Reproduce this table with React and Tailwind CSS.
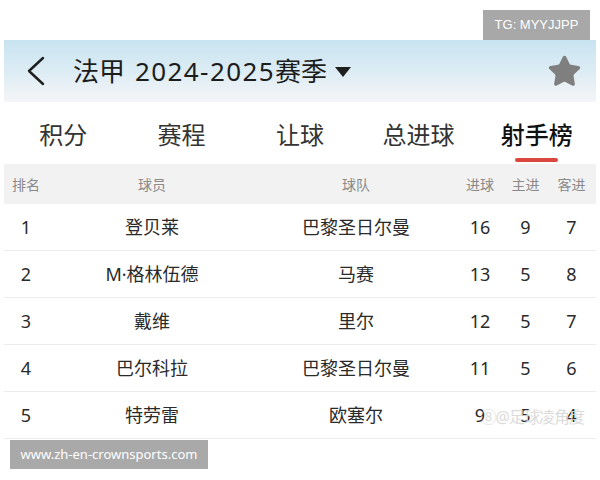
import { Star } from 'lucide-react';

const FONT = { fontFamily: '"Noto Sans", "Noto Sans CJK SC", sans-serif' };

const tabs = ['积分', '赛程', '让球', '总进球', '射手榜'];

const rows = [
  { rank: 1, player: '登贝莱', team: '巴黎圣日尔曼', goals: 16, home: 9, away: 7 },
  { rank: 2, player: 'M·格林伍德', team: '马赛', goals: 13, home: 5, away: 8 },
  { rank: 3, player: '戴维', team: '里尔', goals: 12, home: 5, away: 7 },
  { rank: 4, player: '巴尔科拉', team: '巴黎圣日尔曼', goals: 11, home: 5, away: 6 },
  { rank: 5, player: '特劳雷', team: '欧塞尔', goals: 9, home: 5, away: 4 },
];

function Cols({ cells, className }) {
  const widths = ['w-[44px]', 'w-[208px]', 'w-[200px]', 'w-[48px]', 'w-[43px]', 'w-[49px]'];
  return (
    <div className={`flex items-center ${className}`}>
      {cells.map((c, i) => (
        <div key={i} className={`${widths[i]} shrink-0 text-center whitespace-nowrap`}>
          {c}
        </div>
      ))}
    </div>
  );
}

export default function App() {
  return (
    <div className="relative w-[600px] h-[480px] bg-white overflow-hidden" style={FONT}>
      {/* top badge */}
      <div className="h-[40px] flex justify-end items-start pt-[10px] pr-[10px]">
        <div className="w-[107px] h-[30px] bg-[#a8a8a8] text-white text-[13px] flex items-center justify-center" style={{ fontFamily: '"Liberation Sans", sans-serif' }}>
          TG: MYYJJPP
        </div>
      </div>

      {/* header */}
      <div className="mx-[4px] h-[62px] flex items-center bg-gradient-to-b from-[#c8e4f1] via-[#dcecf4] to-[#f4f5f7]">
        <svg width="22" height="32" viewBox="0 0 22 32" className="ml-[21px]">
          <polyline points="18,3 4,16 18,29" fill="none" stroke="#1f1f1f" strokeWidth="2.4" strokeLinecap="round" strokeLinejoin="round" />
        </svg>
        <div className="ml-[26px] text-[26px] text-[#1c1c1c] leading-none flex items-center">
          <span>法甲</span>
          <span className="ml-[10px] tracking-[1.4px]">2024-2025</span>
          <span>赛季</span>
        </div>
        <svg width="16" height="10" viewBox="0 0 16 10" className="ml-[8px] mt-[2px]">
          <polygon points="0,0 16,0 8,10" fill="#1f1f1f" />
        </svg>
        <div className="ml-auto mr-[14px] text-[#7f7f7f]">
          <Star size={35} fill="currentColor" strokeWidth={1.5} />
        </div>
      </div>

      {/* tabs */}
      <div className="mx-[4px] h-[62px] grid grid-cols-5">
        {tabs.map((t, i) => (
          <div key={t} className="relative flex flex-col items-center justify-center">
            <span className={`text-[24px] leading-none mt-[4px] ${i === 4 ? 'text-[#111] font-medium' : 'text-[#333]'}`}>{t}</span>
            {i === 4 && <div className="absolute bottom-[2px] w-[43px] h-[4px] rounded-full bg-[#d9473f]" />}
          </div>
        ))}
      </div>

      {/* table */}
      <div className="mx-[4px]">
        <Cols
          cells={['排名', '球员', '球队', '进球', '主进', '客进']}
          className="h-[40px] bg-[#f2f2f2] text-[14px] text-[#8a8a8a]"
        />
        {rows.map((r) => (
          <div key={r.rank} className="relative">
            <Cols
              cells={[r.rank, r.player, r.team, r.goals, r.home, r.away]}
              className="h-[47px] border-b border-[#ececec] text-[18px] text-[#2a2a2a]"
            />
            {r.rank === 5 && (
              <div className="absolute right-[12px] top-[13px] text-[16px] text-[#d8d8d8] opacity-90 tracking-[-1px]">
                ⑧@足球凌角度
              </div>
            )}
          </div>
        ))}
      </div>

      {/* bottom watermark */}
      <div className="ml-[10px] mt-[1px] w-[198px] h-[29px] bg-[#a9a9a9] text-white text-[13px] flex items-center justify-center">
        www.zh-en-crownsports.com
      </div>
    </div>
  );
}
